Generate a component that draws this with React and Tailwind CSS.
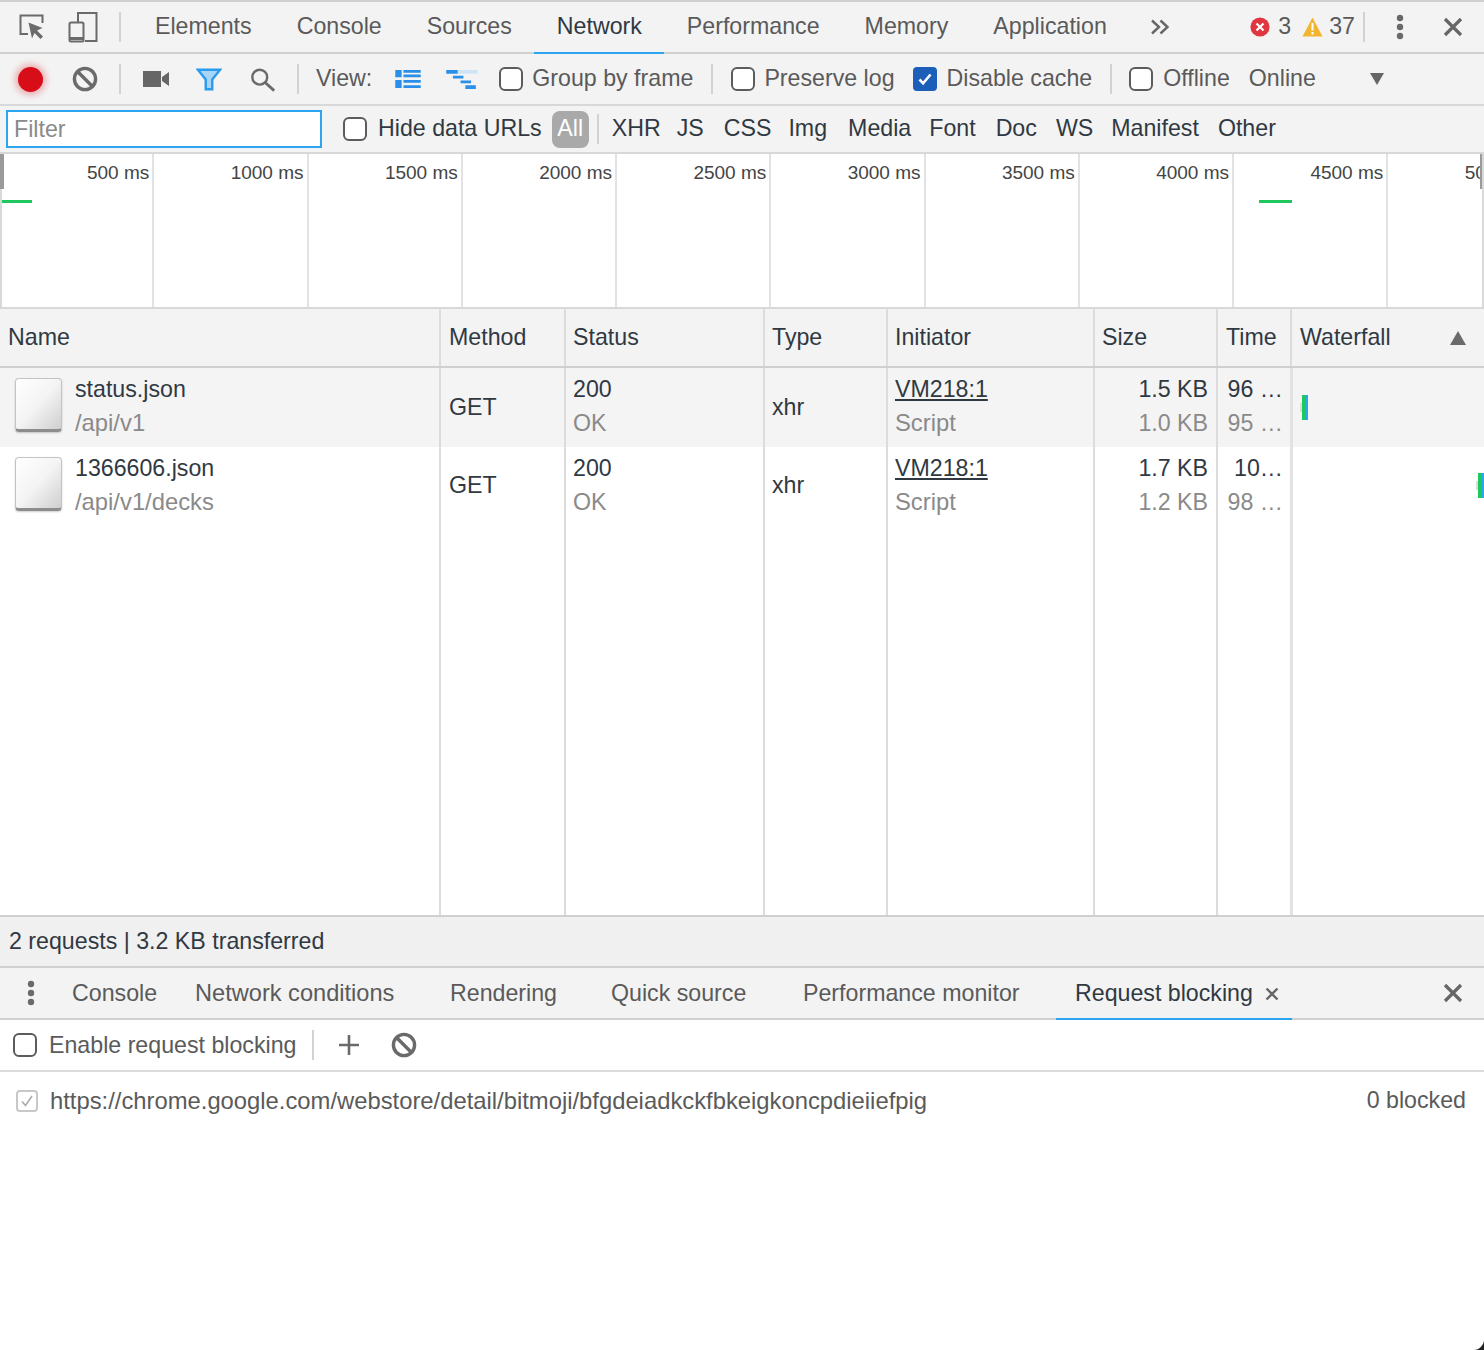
const topTabs = ['Elements', 'Console', 'Sources', 'Network', 'Performance', 'Memory', 'Application']

const bottomTabs = [
  ['Console', 'w-[123px]', ''],
  ['Network conditions', 'w-[255px]', 'text-[23.6px]'],
  ['Rendering', 'w-[161px]', ''],
  ['Quick source', 'w-[192px]', ''],
  ['Performance monitor', 'w-[253px]', ''],
]

const filters = [
  ['XHR', 'ml-[13px]'],
  ['JS', 'ml-[16px]'],
  ['CSS', 'ml-[20px]'],
  ['Img', 'ml-[17px]'],
  ['Media', 'ml-[21px]'],
  ['Font', 'ml-[18px]'],
  ['Doc', 'ml-[20px]'],
  ['WS', 'ml-[19px]'],
  ['Manifest', 'ml-[18px]'],
  ['Other', 'ml-[19px]'],
]

const ticks = ['500 ms', '1000 ms', '1500 ms', '2000 ms', '2500 ms', '3000 ms', '3500 ms', '4000 ms', '4500 ms', '5000 ms']

const columns = 'grid grid-cols-[441px_125px_199px_123px_207px_123px_74px_1fr]'
const cellLine = 'border-r-2 border-[#dcdcdc]'
const twoLineCell = 'flex flex-col justify-center gap-[6px] pb-0.5 leading-[28px]'

function Separator({ className = '' }) {
  return <div className={`w-0.5 h-[30px] bg-[#d2d2d2] ${className}`} />
}

function Checkbox({ checked, className = '' }) {
  if (checked) {
    return (
      <div className={`w-6 h-6 rounded bg-[#1b5fb8] flex items-center justify-center ${className}`}>
        <svg width="16" height="16" viewBox="0 0 16 16" fill="none" stroke="#fff" strokeWidth="2.6">
          <path d="M2.5 8.5l3.6 3.8L13.5 3.5" />
        </svg>
      </div>
    )
  }
  return <div className={`w-6 h-6 rounded-md border-2 border-[#5c5c5c] bg-white ${className}`} />
}

function BlockIcon() {
  return (
    <svg width="26" height="26" viewBox="0 0 26 26" fill="none" stroke="#6a6a6a" strokeWidth="3.4">
      <circle cx="13" cy="13" r="10.6" />
      <path d="M5.5 5.5l15 15" />
    </svg>
  )
}

function CloseIcon() {
  return (
    <svg width="20" height="20" viewBox="0 0 20 20" stroke="#666" strokeWidth="3.2">
      <path d="M2 2l16 16M18 2L2 18" />
    </svg>
  )
}

function Dots() {
  return (
    <svg width="8" height="26" viewBox="0 0 8 26" fill="#6a6a6a">
      <circle cx="4" cy="4" r="3.2" />
      <circle cx="4" cy="13" r="3.2" />
      <circle cx="4" cy="22" r="3.2" />
    </svg>
  )
}

function FileIcon() {
  return (
    <div className="mb-[4px] w-[47px] h-[54px] rounded-sm border border-[#c4c4c4] border-b-[3px] border-b-[#8d8d8d] bg-gradient-to-br from-white via-[#f4f4f4] to-[#cfcfcf] shadow-[0_1px_2px_rgba(0,0,0,0.2)]" />
  )
}

function TopBar() {
  return (
    <div className="h-[50px] bg-[#f3f3f3] border-t-2 border-b-2 border-[#d0d0d0] box-content flex items-center text-[#5a5a5a]">
      <div className="flex items-center w-[119px] pl-[18px] gap-[22px]">
        <svg width="28" height="28" viewBox="0 0 28 28" fill="none">
          <path d="M10 21H2.5V2.5h22V10" stroke="#6a6a6a" strokeWidth="2" />
          <path d="M10.5 9.5l14 5.5-5.5 2.5 6 6-2.5 2.5-6-6-2.5 5.5z" fill="#6a6a6a" />
        </svg>
        <svg width="30" height="32" viewBox="0 0 30 32" fill="none" stroke="#6a6a6a" strokeWidth="2">
          <path d="M10 11V2h18.5v28H17" />
          <rect x="1.5" y="11.5" width="14" height="19" rx="1.5" />
          <path d="M1.5 27.5h14" strokeWidth="3" />
        </svg>
      </div>
      <Separator />
      <div className="flex ml-[11.5px]">
        {topTabs.map((name) => (
          <div
            key={name}
            className={`h-[50px] px-[22.5px] flex items-center ${name === 'Network' ? 'text-[#303942] shadow-[0_2px_0_#2aa5f0]' : ''}`}
          >
            {name}
          </div>
        ))}
      </div>
      <svg className="ml-[21px]" width="20" height="16" viewBox="0 0 20 16" fill="none" stroke="#666" strokeWidth="2.4">
        <path d="M2 1.5L9 8l-7 6.5M10.5 1.5l7 6.5-7 6.5" />
      </svg>
      <svg className="ml-[80px]" width="20" height="20" viewBox="0 0 20 20">
        <circle cx="10" cy="10" r="9.6" fill="#e0363f" />
        <path d="M6.5 6.5l7 7M13.5 6.5l-7 7" stroke="#fff" strokeWidth="2.2" />
      </svg>
      <span className="ml-[8px]">3</span>
      <svg className="ml-[11px]" width="21" height="20" viewBox="0 0 21 20">
        <path d="M10.5 0.5L20.5 19.5H0.5z" fill="#f2b530" />
        <path d="M9.5 6h2v7.5h-2zM9.5 15h2v2.5h-2z" fill="#fff" />
      </svg>
      <span className="ml-[6px]">37</span>
      <Separator className="ml-[8px]" />
      <div className="ml-[31px] flex"><Dots /></div>
      <div className="ml-[39px] flex"><CloseIcon /></div>
    </div>
  )
}

function NetworkBar() {
  return (
    <div className="h-[50px] bg-[#f3f3f3] border-b-2 border-[#d8d8d8] box-content flex items-center text-[#5a5a5a]">
      <div className="ml-[18px] w-[25px] h-[25px] rounded-full bg-[#d70d17] shadow-[0_0_6px_3px_rgba(215,13,23,0.3)]" />
      <div className="ml-[29px] flex"><BlockIcon /></div>
      <Separator className="ml-[21px]" />
      <svg className="ml-[22px]" width="26" height="16" viewBox="0 0 26 16" fill="#666">
        <path d="M0 0h18v16H0zM19 6l7-5v14l-7-5z" />
      </svg>
      <svg className="ml-[27px]" width="26" height="23" viewBox="0 0 28 24">
        <path d="M2 1.5h24L17.5 12v10.5h-7V12z" fill="#a8d4f5" stroke="#2a9bed" strokeWidth="2.6" />
      </svg>
      <svg className="ml-[28px]" width="26" height="25" viewBox="0 0 28 26" fill="none" stroke="#6a6a6a" strokeWidth="2.6">
        <circle cx="10.5" cy="10.5" r="8" />
        <path d="M16 16l10 9" strokeWidth="3" />
      </svg>
      <Separator className="ml-[21px]" />
      <span className="ml-[17px]">View:</span>
      <svg className="ml-[23px]" width="26" height="20" viewBox="0 0 28 22" fill="#2a8fe8">
        <path d="M0 1h7v8H0zM0 12h7v9H0zM9 1h19v3H9zM9 6h19v3H9zM9 12h19v3H9zM9 18h19v3H9z" />
      </svg>
      <svg className="ml-[25px]" width="32" height="21" viewBox="0 0 33 22">
        <path d="M12 1h21v4H12z" fill="#cfe4f6" />
        <path d="M0 1h12v4H0zM7 7h11v3H7zM15 12h11v3H15zM20 17h11v4H20z" fill="#2a8fe8" />
      </svg>
      <Checkbox className="ml-[21px]" />
      <span className="ml-[9px]">Group by frame</span>
      <Separator className="ml-[18px]" />
      <Checkbox className="ml-[18px]" />
      <span className="ml-[9px]">Preserve log</span>
      <Checkbox checked className="ml-[18px]" />
      <span className="ml-[10px]">Disable cache</span>
      <Separator className="ml-[18px]" />
      <Checkbox className="ml-[17px]" />
      <span className="ml-[10px]">Offline</span>
      <span className="ml-[19px]">Online</span>
      <svg className="ml-[54px]" width="14" height="12" viewBox="0 0 14 12" fill="#666">
        <path d="M0 0h14L7 12z" />
      </svg>
    </div>
  )
}

function FilterBar() {
  return (
    <div className="h-[46px] bg-[#f3f3f3] border-b-2 border-[#d8d8d8] box-content flex items-center text-[#303942]">
      <div className="ml-[6px] w-[316px] h-[38px] bg-white border-2 border-[#2aa5f0] flex items-center pl-[6px] pt-0.5 text-[#8a8a8a]">Filter</div>
      <Checkbox className="ml-[21px]" />
      <span className="ml-[11px]">Hide data URLs</span>
      <div className="ml-[10px] w-[37px] h-[37px] rounded-lg bg-[#a9a9a9] text-white flex items-center justify-center">All</div>
      <div className="ml-[8px] w-0.5 h-[30px] bg-[#d2d2d2]" />
      {filters.map(([name, margin]) => (
        <span key={name} className={margin}>{name}</span>
      ))}
    </div>
  )
}

function Timeline() {
  return (
    <div className="relative h-[153px] bg-white border-r-2 border-b-2 border-[#d8d8d8] box-content flex overflow-hidden text-[19px] leading-none text-[#444] shadow-[inset_2px_0_0_#d8d8d8]">
      <div className="flex">
        {ticks.map((tick) => (
          <div key={tick} className="w-[154.25px] shrink-0 border-r-2 border-[#e2e2e2] text-right pr-[3px] pt-[9px] whitespace-nowrap">
            {tick}
          </div>
        ))}
      </div>
      <div className="absolute left-0 top-0 w-1 h-[35px] bg-[#9a9a9a]" />
      <div className="absolute right-[-2px] top-0 w-1 h-[35px] bg-[#9a9a9a]" />
      <div className="absolute left-[2px] top-[46px] w-[30px] h-[3px] bg-[#1fc85f]" />
      <div className="absolute left-[1259px] top-[46px] w-[33px] h-[3px] bg-[#1fc85f]" />
    </div>
  )
}

function HeaderRow() {
  const names = [
    ['Name', 'pl-[8px]'],
    ['Method', 'pl-[8px]'],
    ['Status', 'pl-[7px]'],
    ['Type', 'pl-[7px]'],
    ['Initiator', 'pl-[7px]'],
    ['Size', 'pl-[7px]'],
    ['Time', 'pl-[8px]'],
  ]
  return (
    <div className={`${columns} h-[57px] bg-[#f3f3f3] border-b-2 border-[#d0d0d0] box-content text-[#303942]`}>
      {names.map(([name, pad]) => (
        <div key={name} className={`${cellLine} flex items-center ${pad}`}>{name}</div>
      ))}
      <div className="flex items-center justify-between pl-[8px] pr-[18px]">
        Waterfall
        <svg width="16" height="14" viewBox="0 0 16 14" fill="#6a6a6a">
          <path d="M8 0l8 14H0z" />
        </svg>
      </div>
    </div>
  )
}

function RequestRow({ row }) {
  return (
    <div className={`${columns} h-[78.5px] ${row.bg} text-[#303942]`}>
      <div className={`${cellLine} flex items-center pl-[15px]`}>
        <FileIcon />
        <div className={`ml-[13px] ${twoLineCell}`}>
          <span>{row.name}</span>
          <span className="text-[23.8px] text-[#8a8a8a]">{row.path}</span>
        </div>
      </div>
      <div className={`${cellLine} flex items-center pl-[8px]`}>GET</div>
      <div className={`${cellLine} ${twoLineCell} pl-[7px]`}>
        <span>200</span>
        <span className="text-[#8a8a8a]">OK</span>
      </div>
      <div className={`${cellLine} flex items-center pl-[7px]`}>xhr</div>
      <div className={`${cellLine} ${twoLineCell} pl-[7px]`}>
        <span className="underline">VM218:1</span>
        <span className="text-[23.8px] text-[#8a8a8a]">Script</span>
      </div>
      <div className={`${cellLine} ${twoLineCell} pr-[8px] text-right`}>
        <span>{row.size}</span>
        <span className="text-[#8a8a8a]">{row.resource}</span>
      </div>
      <div className={`${cellLine} ${twoLineCell} pr-[7px] text-right`}>
        <span>{row.time}</span>
        <span className="text-[#8a8a8a]">{row.latency}</span>
      </div>
      <div className="border-l-[3px] border-[#e2e2e2] -ml-0.5 flex items-center">
        <div className={`${row.barMargin} w-[2px] h-[9px] bg-[#dcdcdc] shrink-0`} />
        <div className="w-[6px] h-[25px] bg-[#1fc85f] border-r-2 border-[#2aa5f0] shrink-0" />
      </div>
    </div>
  )
}

function RequestTable() {
  const rows = [
    { name: 'status.json', path: '/api/v1', size: '1.5 KB', resource: '1.0 KB', time: '96 …', latency: '95 …', bg: 'bg-[#f4f4f4]', barMargin: 'ml-[7px]' },
    { name: '1366606.json', path: '/api/v1/decks', size: '1.7 KB', resource: '1.2 KB', time: '10…', latency: '98 …', bg: 'bg-white', barMargin: 'ml-[183px]' },
  ]
  return (
    <div className="flex flex-col h-[547px] bg-white">
      {rows.map((row) => <RequestRow key={row.name} row={row} />)}
      <div className={`${columns} flex-1`}>
        {[0, 1, 2, 3, 4, 5, 6].map((i) => <div key={i} className={cellLine} />)}
        <div className="border-l-[3px] border-[#e2e2e2] -ml-0.5" />
      </div>
    </div>
  )
}

function Drawer() {
  return (
    <div className="flex-1 bg-white flex flex-col text-[#5a5a5a]">
      <div className="h-[50px] bg-[#f3f3f3] border-t-2 border-b-2 border-[#d0d0d0] box-content flex items-center">
        <div className="ml-[27px] w-[45px] flex"><Dots /></div>
        <div className="flex pt-[1px]">
          {bottomTabs.map(([name, width, size]) => (
            <div key={name} className={`${width} ${size}`}>{name}</div>
          ))}
        </div>
        <div className="w-[236px] h-[50px] pt-[1px] shadow-[0_2px_0_#2aa5f0] flex items-center pl-[19px] text-[#303942]">
          Request blocking
          <svg className="ml-[12px]" width="14" height="14" viewBox="0 0 14 14" stroke="#666" strokeWidth="2.4">
            <path d="M1.5 1.5l11 11M12.5 1.5l-11 11" />
          </svg>
        </div>
        <div className="ml-[151px] flex"><CloseIcon /></div>
      </div>
      <div className="h-[50px] border-b-2 border-[#dcdcdc] box-content flex items-center">
        <Checkbox className="ml-[13px]" />
        <span className="ml-[12px] pt-[1px]">Enable request blocking</span>
        <Separator className="ml-[15px]" />
        <svg className="ml-[25px]" width="20" height="20" viewBox="0 0 20 20" stroke="#6a6a6a" strokeWidth="2.6">
          <path d="M10 0v20M0 10h20" />
        </svg>
        <div className="ml-[32px] flex"><BlockIcon /></div>
      </div>
      <div className="h-[56px] pt-[1px] flex items-center pr-[18px]">
        <div className="ml-[16px] w-[22px] h-[22px] rounded border-2 border-[#c8c8c8] flex items-center justify-center">
          <svg width="14" height="14" viewBox="0 0 14 14" fill="none" stroke="#aaa" strokeWidth="1.6">
            <path d="M2 7.5l3.5 4L12 2" />
          </svg>
        </div>
        <span className="ml-[12px] text-[23.8px]">https://chrome.google.com/webstore/detail/bitmoji/bfgdeiadkckfbkeigkoncpdieiiefpig</span>
        <span className="ml-auto">0 blocked</span>
      </div>
    </div>
  )
}

export default function App() {
  return (
    <div className="relative w-[1484px] h-[1350px] overflow-hidden flex flex-col bg-white font-['Liberation_Sans',Arial,sans-serif] text-[23.2px] leading-none">
      <TopBar />
      <NetworkBar />
      <FilterBar />
      <Timeline />
      <HeaderRow />
      <RequestTable />
      <div className="h-[49px] bg-[#f0f0f0] border-t-2 border-[#d0d0d0] box-content flex items-center pl-[9px] text-[#303942]">
        2 requests | 3.2 KB transferred
      </div>
      <Drawer />
      <svg className="absolute right-0 bottom-0" width="10" height="10" viewBox="0 0 10 10">
        <path d="M10 0v10H0C5 10 10 5 10 0z" fill="#222" />
      </svg>
    </div>
  )
}
